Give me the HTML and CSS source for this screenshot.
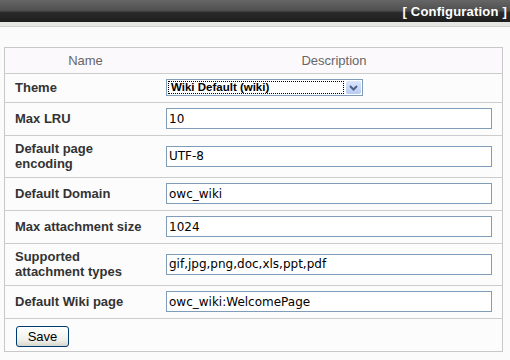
FILE: index.html
```html
<!DOCTYPE html>
<html lang="en">
<head>
    <meta charset="UTF-8">
    <title>Configuration</title>
    <link rel="stylesheet" href="styles.css">
</head>
<body>
    <div class="topbar">
        <span class="topbar-title">[ Configuration ]</span>
    </div>
    <div class="subbar"></div>

    <div class="content">
        <form class="config-form">
            <table class="config-table">
                <tr class="head-row">
                    <th class="col-name">Name</th>
                    <th>Description</th>
                </tr>
                <tr>
                    <td class="label">Theme</td>
                    <td>
                        <div class="fake-select">
                            <span class="select-value">Wiki Default (wiki)</span>
                            <span class="select-btn">
                                <svg width="9" height="6" viewBox="0 0 9 6"><path d="M1 1 L4.5 4.5 L8 1" fill="none" stroke="#4d6185" stroke-width="2"/></svg>
                            </span>
                        </div>
                    </td>
                </tr>
                <tr>
                    <td class="label">Max LRU</td>
                    <td><input type="text" value="10"></td>
                </tr>
                <tr>
                    <td class="label">Default page encoding</td>
                    <td><input type="text" value="UTF-8"></td>
                </tr>
                <tr>
                    <td class="label">Default Domain</td>
                    <td><input type="text" value="owc_wiki"></td>
                </tr>
                <tr>
                    <td class="label">Max attachment size</td>
                    <td><input type="text" value="1024"></td>
                </tr>
                <tr>
                    <td class="label">Supported attachment types</td>
                    <td><input type="text" value="gif,jpg,png,doc,xls,ppt,pdf"></td>
                </tr>
                <tr>
                    <td class="label">Default Wiki page</td>
                    <td><input type="text" value="owc_wiki:WelcomePage"></td>
                </tr>
                <tr class="last-row">
                    <td colspan="2"><button type="button">Save</button></td>
                </tr>
            </table>
        </form>
    </div>
</body>
</html>
```

FILE: styles.css
```css
body {
    margin: 0;
    padding: 0;
    background: #fbfbfb;
    font-family: "Liberation Sans", Arial, sans-serif;
    font-size: 13px;
    color: #333;
}

.topbar {
    height: 22px;
    background: linear-gradient(to bottom, #666 0%, #4e4e4e 50%, #2b2b2b 55%, #1e1e1e 100%);
    display: flex;
    justify-content: flex-end;
    align-items: center;
    padding-right: 3px;
}

.topbar-title {
    color: #fff;
    font-weight: bold;
    font-size: 13px;
    letter-spacing: 0.2px;
}

.subbar {
    height: 4px;
    background: #e6e6e3;
    border-bottom: 1px solid #cfcfcc;
}

.content {
    padding: 20px 7px 0 4px;
}

.config-table {
    width: 100%;
    border-collapse: collapse;
    border: 1px solid #c8c8c8;
    background: #fcfcfc;
}

.config-table th {
    font-weight: normal;
    color: #666;
    height: 25px;
    background: #fbf9fc;
    padding: 0;
    text-align: center;
}

.col-name {
    width: 161px;
}

.config-table td {
    padding: 5px 0 6px 0;
    border-top: 1px solid #cccccc;
    vertical-align: middle;
}

.config-table td.label {
    padding-left: 10px;
    padding-right: 21px;
    font-weight: bold;
    color: #333;
    line-height: 15px;
}

.config-table td input {
    display: block;
    box-sizing: border-box;
    width: 326px;
    height: 21px;
    margin: 0;
    border: 1px solid #7f9db9;
    background: #fff;
    padding: 0 2px;
    font-family: "DejaVu Sans", Tahoma, sans-serif;
    font-size: 12px;
    color: #000;
}

.fake-select {
    display: flex;
    box-sizing: border-box;
    width: 197px;
    height: 17px;
    border: 1px solid #7f9db9;
    background: #fff;
}

.select-value {
    flex: 1;
    margin: 1px;
    padding-left: 2px;
    border: 1px dotted #000;
    font-weight: bold;
    font-size: 11.5px;
    line-height: 11px;
    color: #000;
}

.select-btn {
    width: 15px;
    margin: 1px;
    border-radius: 2px;
    background: linear-gradient(to bottom, #dbe6fb, #b6cbf4);
    display: flex;
    justify-content: center;
    align-items: center;
}

.config-table .last-row td {
    padding: 7px 0 4px 11px;
}

button {
    width: 53px;
    height: 21px;
    border: 1px solid #003c74;
    border-radius: 3px;
    background: linear-gradient(to bottom, #fff, #f0f0ea 70%, #d8d6cc);
    font-family: "Liberation Sans", Arial, sans-serif;
    font-size: 13px;
    color: #000;
    padding: 0;
}
```
